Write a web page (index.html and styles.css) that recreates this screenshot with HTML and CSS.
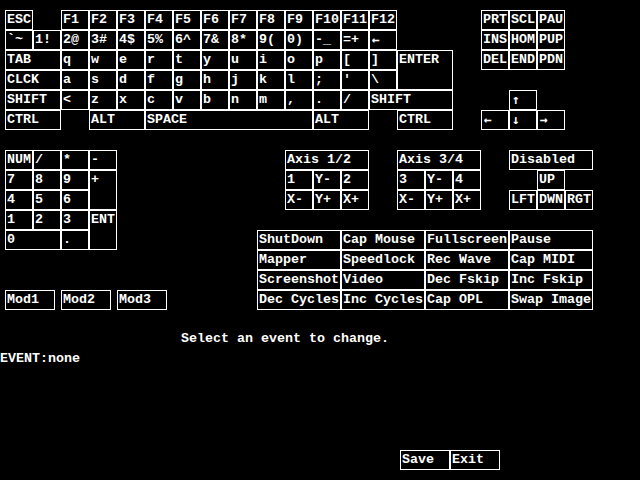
FILE: index.html
```html
<!DOCTYPE html>
<html lang="en">
<head>
    <meta charset="UTF-8">
    <title>Keymapper</title>
    <link rel="stylesheet" href="styles.css">
</head>
<body>

    <div class="board">
        <!-- main keyboard -->
        <div class="keys main">
            <div class="key">ESC</div>
            <div class="blank"></div>
            <div class="key">F1</div>
            <div class="key">F2</div>
            <div class="key">F3</div>
            <div class="key">F4</div>
            <div class="key">F5</div>
            <div class="key">F6</div>
            <div class="key">F7</div>
            <div class="key">F8</div>
            <div class="key">F9</div>
            <div class="key">F10</div>
            <div class="key">F11</div>
            <div class="key">F12</div>
            <div class="blank w2"></div>

            <div class="key">`~</div>
            <div class="key">1!</div>
            <div class="key">2@</div>
            <div class="key">3#</div>
            <div class="key">4$</div>
            <div class="key">5%</div>
            <div class="key">6^</div>
            <div class="key">7&amp;</div>
            <div class="key">8*</div>
            <div class="key">9(</div>
            <div class="key">0)</div>
            <div class="key">-_</div>
            <div class="key">=+</div>
            <div class="key arrow">←</div>
            <div class="blank w2"></div>

            <div class="key w2">TAB</div>
            <div class="key">q</div>
            <div class="key">w</div>
            <div class="key">e</div>
            <div class="key">r</div>
            <div class="key">t</div>
            <div class="key">y</div>
            <div class="key">u</div>
            <div class="key">i</div>
            <div class="key">o</div>
            <div class="key">p</div>
            <div class="key">[</div>
            <div class="key">]</div>
            <div class="key w2 h2">ENTER</div>

            <div class="key w2">CLCK</div>
            <div class="key">a</div>
            <div class="key">s</div>
            <div class="key">d</div>
            <div class="key">f</div>
            <div class="key">g</div>
            <div class="key">h</div>
            <div class="key">j</div>
            <div class="key">k</div>
            <div class="key">l</div>
            <div class="key">;</div>
            <div class="key">'</div>
            <div class="key">\</div>

            <div class="key w2">SHIFT</div>
            <div class="key">&lt;</div>
            <div class="key">z</div>
            <div class="key">x</div>
            <div class="key">c</div>
            <div class="key">v</div>
            <div class="key">b</div>
            <div class="key">n</div>
            <div class="key">m</div>
            <div class="key">,</div>
            <div class="key">.</div>
            <div class="key">/</div>
            <div class="key w3">SHIFT</div>

            <div class="key w2">CTRL</div>
            <div class="blank"></div>
            <div class="key w2">ALT</div>
            <div class="key w6">SPACE</div>
            <div class="key w2">ALT</div>
            <div class="blank"></div>
            <div class="key w2">CTRL</div>
        </div>

        <!-- ins/home block and arrows -->
        <div class="keys nav">
            <div class="key">PRT</div>
            <div class="key">SCL</div>
            <div class="key">PAU</div>
            <div class="key">INS</div>
            <div class="key">HOM</div>
            <div class="key">PUP</div>
            <div class="key">DEL</div>
            <div class="key">END</div>
            <div class="key">PDN</div>
            <div class="blank w3"></div>
            <div class="blank"></div>
            <div class="key arrow">↑</div>
            <div class="blank"></div>
            <div class="key arrow">←</div>
            <div class="key arrow">↓</div>
            <div class="key arrow">→</div>
        </div>

        <!-- numeric keypad -->
        <div class="keys numpad">
            <div class="key">NUM</div>
            <div class="key">/</div>
            <div class="key">*</div>
            <div class="key">-</div>
            <div class="key">7</div>
            <div class="key">8</div>
            <div class="key">9</div>
            <div class="key h2">+</div>
            <div class="key">4</div>
            <div class="key">5</div>
            <div class="key">6</div>
            <div class="key">1</div>
            <div class="key">2</div>
            <div class="key">3</div>
            <div class="key h2">ENT</div>
            <div class="key w2">0</div>
            <div class="key">.</div>
        </div>

        <!-- joysticks -->
        <div class="keys joy joy1">
            <div class="key w3">Axis 1/2</div>
            <div class="key">1</div>
            <div class="key">Y-</div>
            <div class="key">2</div>
            <div class="key">X-</div>
            <div class="key">Y+</div>
            <div class="key">X+</div>
        </div>

        <div class="keys joy joy2">
            <div class="key w3">Axis 3/4</div>
            <div class="key">3</div>
            <div class="key">Y-</div>
            <div class="key">4</div>
            <div class="key">X-</div>
            <div class="key">Y+</div>
            <div class="key">X+</div>
        </div>

        <div class="keys joy joy3">
            <div class="key w3">Disabled</div>
            <div class="blank"></div>
            <div class="key">UP</div>
            <div class="blank"></div>
            <div class="key">LFT</div>
            <div class="key">DWN</div>
            <div class="key">RGT</div>
        </div>

        <!-- handler events -->
        <div class="keys events">
            <div class="key w3">ShutDown</div>
            <div class="key w3">Cap Mouse</div>
            <div class="key w3">Fullscreen</div>
            <div class="key w3">Pause</div>
            <div class="key w3">Mapper</div>
            <div class="key w3">Speedlock</div>
            <div class="key w3">Rec Wave</div>
            <div class="key w3">Cap MIDI</div>
            <div class="key w3">Screenshot</div>
            <div class="key w3">Video</div>
            <div class="key w3">Dec Fskip</div>
            <div class="key w3">Inc Fskip</div>
            <div class="key w3">Dec Cycles</div>
            <div class="key w3">Inc Cycles</div>
            <div class="key w3">Cap OPL</div>
            <div class="key w3">Swap Image</div>
        </div>

        <div class="mods">
            <div class="key mod">Mod1</div>
            <div class="key mod">Mod2</div>
            <div class="key mod">Mod3</div>
        </div>
    </div>

    <div class="caption">Select an event to change.</div>
    <div class="event-title">EVENT:none</div>

    <div class="actions">
        <div class="key mod">Save</div>
        <div class="key mod">Exit</div>
    </div>

</body>
</html>
```

FILE: styles.css
```css
/* General Styles */
body {
    margin: 0;
    background: #000;
    color: #fff;
    font-family: 'Liberation Mono', 'DejaVu Sans Mono', monospace;
    font-size: 13.333px;
    font-weight: bold;
    line-height: 14px;
    width: 640px;
    height: 480px;
    overflow: hidden;
}

/* 28x20 cells, same as the mapper's own button grid */
.board {
    display: grid;
    grid-template-columns: repeat(21, 28px);
    grid-template-rows: repeat(15, 20px);
    margin: 10px 0 0 5px;
}

.keys {
    display: grid;
    grid-auto-columns: 28px;
    grid-auto-rows: 20px;
}

.main {
    grid-column: 1 / span 16;
    grid-row: 1 / span 6;
    grid-template-columns: repeat(16, 28px);
}

.nav {
    grid-column: 18 / span 3;
    grid-row: 1 / span 6;
    grid-template-columns: repeat(3, 28px);
}

.numpad {
    grid-column: 1 / span 4;
    grid-row: 8 / span 5;
    grid-template-columns: repeat(4, 28px);
}

.joy {
    grid-row: 8 / span 3;
    grid-template-columns: repeat(3, 28px);
}

.joy1 { grid-column: 11 / span 3; }
.joy2 { grid-column: 15 / span 3; }
.joy3 { grid-column: 19 / span 3; }

.events {
    grid-column: 10 / span 12;
    grid-row: 12 / span 4;
    grid-template-columns: repeat(12, 28px);
}

.mods {
    grid-column: 1 / span 6;
    grid-row: 15;
    display: flex;
    gap: 6px;
}

/* Buttons */
.key {
    box-sizing: border-box;
    border: 1px solid #fff;
    padding: 2px 0 0 1px;
    white-space: nowrap;
    overflow: visible;
}

.w2 { grid-column: span 2; }
.w3 { grid-column: span 3; }
.w6 { grid-column: span 6; }
.h2 { grid-row: span 2; }

.arrow {
    font-family: 'DejaVu Sans Mono', monospace;
    font-size: 13px;
    padding-left: 2px;
}

.mod {
    width: 50px;
    height: 20px;
}

/* Status texts */
.caption {
    margin-top: 20px;
    padding: 2px 0 0 181px;
    height: 18px;
}

.event-title {
    padding-top: 2px;
    height: 18px;
}

.actions {
    display: flex;
    margin-top: 80px;
    padding-left: 400px;
}
```
